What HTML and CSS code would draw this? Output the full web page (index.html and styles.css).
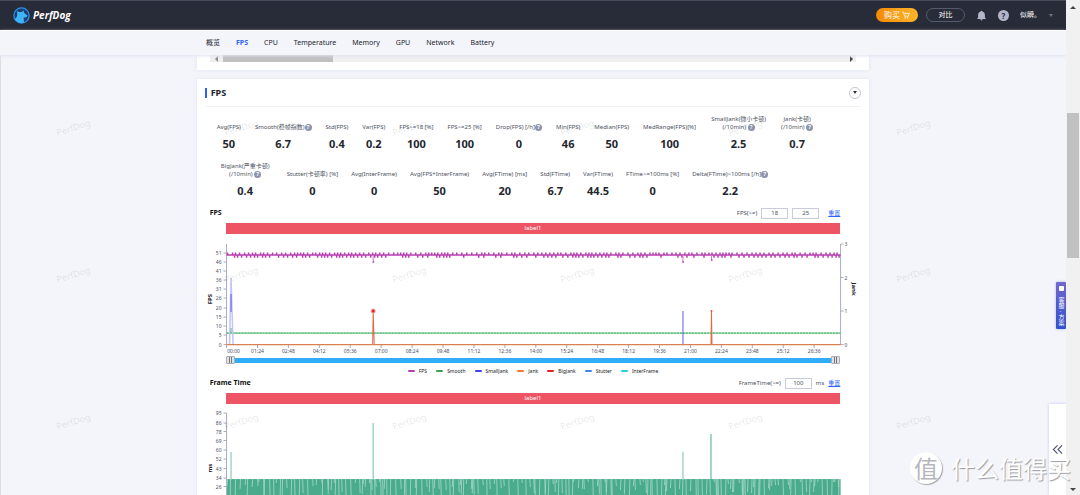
FILE: index.html
```html
<!DOCTYPE html>
<html lang="zh-CN">
<head>
<meta charset="utf-8">
<title>PerfDog</title>
<link rel="stylesheet" href="styles.css">
</head>
<body>
<div class="window">
  <div class="page">
    <header class="topbar">
      <a class="brand" href="#">
        <svg class="brand-mark" viewBox="0 0 16 16" aria-hidden="true">
          <circle cx="8" cy="8" r="7.2" fill="#1c3f70" stroke="#2f8fea" stroke-width="1.2"/>
          <path d="M3.400 3.600C5 5 6.500 4.800 8.400 4.600L9.800 3 10.600 5.600 13.800 8.200 12.400 9.600 10 10 10.400 14.600A7 7 0 0 1 1.800 11.200C4 10 4.600 7 3.400 3.600Z" fill="#3fb4f7"/>
        </svg>
        <span>PerfDog</span>
      </a>
      <div class="tools">
        <button class="pill buy" type="button">购买
          <svg class="cart" viewBox="0 0 10 10" aria-hidden="true"><path d="M0 1.5h2l1.2 5h4.6L9.3 3H3" fill="none" stroke="currentColor"/><circle cx="4" cy="8.6" r=".9" fill="currentColor"/><circle cx="7" cy="8.6" r=".9" fill="currentColor"/></svg>
        </button>
        <button class="pill compare" type="button">对比</button>
        <button class="icon-button" type="button" aria-label="通知">
          <svg viewBox="0 0 12 12"><path d="M6 .8a.9.9 0 0 1 .9.9C8.700 2.100 9.700 3.500 9.700 5.400V8.200L11 9.700H1L2.300 8.200V5.400C2.300 3.500 3.300 2.100 5.100 1.700A.9.9 0 0 1 6 .8ZM4.700 10.200H7.300A1.300 1.300 0 0 1 4.700 10.200Z" fill="#b2b6c8"/></svg>
        </button>
        <button class="icon-button help" type="button" aria-label="帮助">?</button>
        <button class="user" type="button">似瞬。<span class="caret"></span></button>
      </div>
    </header>

    <nav class="tabs">
      <a href="#">概览</a>
      <a href="#" class="active">FPS</a>
      <a href="#">CPU</a>
      <a href="#">Temperature</a>
      <a href="#">Memory</a>
      <a href="#">GPU</a>
      <a href="#">Network</a>
      <a href="#">Battery</a>
    </nav>

    <main class="content">
      <section class="card overview">
        <div class="hscroll"><i class="arrow left"></i><span class="hthumb"></span><i class="arrow right"></i></div>
      </section>

      <section class="card">
        <div class="card-head">
          <h2>FPS</h2>
          <button class="collapse" type="button" aria-label="收起"><span class="caret"></span></button>
        </div>

        <div class="stats">
          <div class="stat"><p>Avg(FPS)</p><b>50</b></div>
          <div class="stat"><p>Smooth(稳帧指数)<i class="q">?</i></p><b>6.7</b></div>
          <div class="stat"><p>Std(FPS)</p><b>0.4</b></div>
          <div class="stat"><p>Var(FPS)</p><b>0.2</b></div>
          <div class="stat"><p>FPS&gt;=18 [%]</p><b>100</b></div>
          <div class="stat"><p>FPS&gt;=25 [%]</p><b>100</b></div>
          <div class="stat"><p>Drop(FPS) [/h]<i class="q">?</i></p><b>0</b></div>
          <div class="stat"><p>Min(FPS)</p><b>46</b></div>
          <div class="stat"><p>Median(FPS)</p><b>50</b></div>
          <div class="stat"><p>MedRange(FPS)[%]</p><b>100</b></div>
          <div class="stat wide"><p>SmallJank(微小卡顿)<br>(/10min) <i class="q">?</i></p><b>2.5</b></div>
          <div class="stat"><p>Jank(卡顿)<br>(/10min) <i class="q">?</i></p><b>0.7</b></div>
        </div>
        <div class="stats second">
          <div class="stat wide"><p>BigJank(严重卡顿)<br>(/10min) <i class="q">?</i></p><b>0.4</b></div>
          <div class="stat"><p>Stutter(卡顿率) [%]</p><b>0</b></div>
          <div class="stat"><p>Avg(InterFrame)</p><b>0</b></div>
          <div class="stat"><p>Avg(FPS+InterFrame)</p><b>50</b></div>
          <div class="stat"><p>Avg(FTime) [ms]</p><b>20</b></div>
          <div class="stat"><p>Std(FTime)</p><b>6.7</b></div>
          <div class="stat"><p>Var(FTime)</p><b>44.5</b></div>
          <div class="stat"><p>FTime&gt;=100ms [%]</p><b>0</b></div>
          <div class="stat"><p>Delta(FTime)&gt;100ms [/h]<i class="q">?</i></p><b>2.2</b></div>
        </div>

        <div class="chart-head first">
          <h3>FPS</h3>
          <label for="fps-low">FPS(&gt;=)</label>
          <input id="fps-low" type="text" value="18">
          <input id="fps-high" type="text" value="25" aria-label="FPS(&gt;=)">
          <a class="apart" href="#">重置</a>
        </div>
        <div class="label-bar">label1</div>
        <svg class="chart" id="fps-chart" viewBox="0 0 672 122"></svg>
        <div class="range"><span class="handle"></span><span class="handle"></span></div>
        <ul class="legend">
          <li class="c-fps">FPS</li>
          <li class="c-smooth">Smooth</li>
          <li class="c-small">SmallJank</li>
          <li class="c-jank">Jank</li>
          <li class="c-big">BigJank</li>
          <li class="c-stutter">Stutter</li>
          <li class="c-inter">InterFrame</li>
        </ul>

        <div class="chart-head">
          <h3>Frame Time</h3>
          <label for="ft">FrameTime(&gt;=)</label>
          <input id="ft" type="text" value="100">
          <span>ms</span>
          <a href="#">重置</a>
        </div>
        <div class="label-bar">label1</div>
        <svg class="chart" id="time-chart" viewBox="0 0 672 122"></svg>
      </section>
    </main>

    <div class="watermarks" aria-hidden="true" id="marks"></div>
    <button class="contact" type="button"><i></i>客服 · 方案</button>
    <button class="drawer" type="button" aria-label="展开">
      <svg viewBox="0 0 12 12"><path d="M6 1.500 1.500 6 6 10.500M11 1.500 6.500 6 11 10.500" fill="none" stroke="#4f5675" stroke-width="1.300"/></svg>
    </button>
  </div>
  <div class="vscroll"><i class="arrow up"></i><span class="vthumb"></span><i class="arrow down"></i></div>
  <div class="stamp"><span class="stamp-badge">值</span><span>什么值得买</span></div>
</div>
<script src="charts.js"></script>
</body>
</html>
```
FILE: styles.css
```css
* { box-sizing: border-box; margin: 0; padding: 0; }
html, body { height: 100%; overflow: hidden; }
body { font: 7px/8px "Noto Sans", "Noto Sans CJK SC", sans-serif; color: #4c5160; background: #f4f5fa; }
button, input { font: inherit; color: inherit; border: 0; background: none; }
a { color: inherit; text-decoration: none; }
i { font-style: normal; }

.window { position: relative; display: flex; height: 100vh; }
.page { position: relative; flex: 1; min-width: 0; overflow: hidden; box-shadow: inset 1px 0 #dcdde3; }

.topbar { display: flex; align-items: center; justify-content: space-between; height: 30px; padding: 0 13px; background: #282c39; box-shadow: inset 0 1px #454b58; }
.brand { display: flex; align-items: center; gap: 3px; color: #fff; font: italic bold 10px/16px "Open Sans", sans-serif; }
.brand-mark { width: 17px; height: 17px; }
.tools { display: flex; align-items: center; color: #fff; }
.pill { display: flex; align-items: center; justify-content: center; gap: 2px; height: 14px; border-radius: 7px; margin-right: 8px; }
.buy { width: 42px; background: linear-gradient(90deg, #f28a05, #ffb52b); font-size: 8px; }
.cart { width: 8px; height: 8px; }
.compare { width: 39px; border: 1px solid #565b6b; margin-right: 11px; }
.icon-button { width: 11px; height: 11px; margin-right: 11px; }
.icon-button svg { display: block; width: 11px; height: 11px; }
.help { border-radius: 50%; background: #b2b6c8; color: #282c39; font-weight: bold; font-size: 8px; line-height: 11px; }
.user { display: flex; align-items: center; gap: 8px; }
.caret { border: 2px solid transparent; border-top: 3px solid #6d7283; border-bottom: 0; }

.tabs { position: relative; z-index: 1; display: flex; align-items: center; gap: 16px; height: 25px; padding: 0 0 0 calc(50% - 327px); border-top: 1px solid #fff; background: #f4f5fa; box-shadow: 0 1px 3px #dfe2f3; color: #22252e; }
.tabs .active { color: #2e62f6; font-weight: bold; }

.content { display: flex; flex-direction: column; gap: 9px; width: 63.1%; margin: 0 auto; }
.card { background: #fff; box-shadow: 0 0 4px #dfe2f3; }
.overview { padding: 0 13px 8px; }
.hscroll { display: flex; align-items: center; height: 7px; background: #efefef; }
.hthumb { width: 110px; height: 7px; margin: 0 auto 0 5px; background: #bfbfbf; }
.arrow { border: 3px solid transparent; }
.left { border-right-color: #8a8a8a; margin-left: 2px; }
.right { border-left-color: #444; }

.card-head { display: flex; align-items: center; justify-content: space-between; height: 28px; margin: 0 8px; border-bottom: 1px solid #f2f2f5; }
h2 { padding-left: 4px; border-left: 2px solid #2e62f6; font-size: 9px; line-height: 10px; color: #20232b; }
.collapse { display: flex; align-items: center; justify-content: center; width: 12px; height: 12px; border: 1px solid #c3c5d4; border-radius: 50%; }
.collapse .caret { border-top-color: #333; }

.stats { display: flex; align-items: flex-end; gap: 14px; margin: 8px 20px 0; font-size: 6px; }
.second { gap: 13px; margin-top: 6px; }
.stat { text-align: center; white-space: nowrap; }
.wide { min-width: 57px; }
.stat b { display: block; padding-top: 1px; font-size: 11px; line-height: 24px; color: #23262e; }
.q { display: inline-block; width: 7px; height: 7px; border-radius: 50%; background: #8e93ac; color: #fff; line-height: 7px; font-weight: bold; text-align: center; }

.chart-head { display: flex; align-items: center; gap: 4px; height: 16px; padding: 0 29px 0 13px; font-size: 6px; }
.first { margin-top: 2px; }
h3 { margin-right: auto; font-size: 7px; line-height: 8px; color: #111; }
.chart-head input { width: 27px; height: 11px; border: 1px solid #c9cbda; text-align: center; }
.chart-head a { color: #2e62f6; text-decoration: underline; }
.chart-head .apart { margin-left: 5px; }
.label-bar { margin: 2px 29px 0; font-size: 6px; line-height: 11px; text-align: center; color: #fff; background: #ed5565; }
.chart { display: block; width: 100%; }
.chart text { font-size: 5px; fill: #4a5062; }
.chart .name { font-size: 6px; font-weight: bold; fill: #222; }

.range { display: flex; align-items: center; justify-content: space-between; height: 8px; margin: 0 29px; background: linear-gradient(#fff 2px, #2fadf8 2px, #2fadf8 7px, #fff 7px); }
.handle { width: 9px; height: 8px; border: 1px solid #a9adb5; border-radius: 1px; background: linear-gradient(90deg, #dfe1e5 2px, #777 2px, #777 3px, #dfe1e5 3px, #dfe1e5 4px, #777 4px, #777 5px, #dfe1e5 5px); }
.legend { display: flex; justify-content: center; gap: 9px; padding-top: 3px; list-style: none; font-size: 5px; color: #222; }
.legend li { display: flex; align-items: center; gap: 4px; }
.legend li::before { content: ""; width: 7px; height: 2px; border-radius: 1px; background: var(--c); }
.c-fps { --c: #b93db2; } .c-smooth { --c: #35a853; } .c-small { --c: #4040f0; } .c-jank { --c: #f4752c; }
.c-big { --c: #e22424; } .c-stutter { --c: #4285f4; } .c-inter { --c: #26cfdb; }

.watermarks { position: absolute; z-index: 1; inset: 122px 0 0 56px; display: grid; grid-template-columns: repeat(6, 168px); grid-auto-rows: 147px; pointer-events: none; font-size: 9px; line-height: 12px; color: rgba(40, 44, 57, .12); }
.watermarks span { width: 34px; height: 12px; transform: rotate(-17deg); }
.contact { position: absolute; right: 0; top: 282px; display: flex; align-items: center; justify-content: center; gap: 6px; width: 10px; height: 47px; writing-mode: vertical-rl; border-radius: 1px; color: #fff; font-size: 6px; background: linear-gradient(#7168cf, #3150cb); box-shadow: 0 0 3px #a9b2dd; white-space: nowrap; }
.contact i { width: 5px; height: 5px; background: #fff; border-radius: 1px; }
.drawer { position: absolute; right: 0; bottom: 0; width: 17px; height: 91px; background: #fff; box-shadow: 0 0 3px #bdc9f8; }
.drawer svg { display: block; width: 11px; height: 11px; margin: 0 auto; }
.stamp { position: absolute; z-index: 2; right: 9px; bottom: 11px; display: flex; align-items: center; gap: 9px; font: 24px/32px "Noto Sans CJK SC", sans-serif; color: #fff; text-shadow: 1px 1px 1px #999ca4; white-space: nowrap; pointer-events: none; }
.stamp-badge { width: 32px; height: 32px; border-radius: 50%; background: #fff; color: #b5b7bd; text-align: center; text-shadow: none; box-shadow: 1px 1px 1px #a5a7ad; }

.vscroll { display: flex; flex-direction: column; align-items: center; width: 14px; background: #f1f1f1; }
.vthumb { width: 12px; height: 29.3%; margin: 104px 0 auto; background: #c1c1c1; }
.up { border-bottom-color: #444; margin-top: 3px; }
.down { border-top-color: #444; margin-bottom: 1px; }
```
FILE: charts.js
```js
const NS = 'http://www.w3.org/2000/svg';
const LEFT = 29.5, RIGHT = 643;

function add(svg, tag, attrs, text) {
  const el = document.createElementNS(NS, tag);
  for (const k in attrs) el.setAttribute(k, attrs[k]);
  if (text !== undefined) el.textContent = text;
  svg.appendChild(el);
}
function line(svg, d, stroke, width, extra) {
  add(svg, 'path', Object.assign({ d, fill: 'none', stroke, 'stroke-width': width }, extra));
}
let seed = 7;
function rand() {
  seed = (seed * 16807) % 2147483647;
  return seed / 2147483647;
}
function yAxis(svg, ticks, top, bottom) {
  line(svg, `M${LEFT} ${top}V${bottom}`, '#a9acc0', 1);
  for (const [label, y] of ticks) {
    line(svg, `M${LEFT - 3} ${y}H${LEFT}`, '#a9acc0', 1);
    add(svg, 'text', { x: LEFT - 5, y: y + 2, 'text-anchor': 'end' }, label);
  }
}

const fps = document.getElementById('fps-chart');
yAxis(fps, [[51, 19], [46, 28], [41, 37], [36, 46], [31, 55], [26, 64], [20, 74], [15, 83], [10, 92], [5, 101], [0, 110.5]], 10, 111);
line(fps, `M${RIGHT} 10V111`, '#a9acc0', 1);
[[3, 10], [2, 43.5], [1, 77], [0, 110.5]].forEach(([label, y]) => {
  line(fps, `M${RIGHT} ${y}h3`, '#a9acc0', 1);
  add(fps, 'text', { x: RIGHT + 4, y: y + 2 }, label);
});
for (let i = 0; i < 20; i++) {
  const x = LEFT + i * 30.9, s = i * 84;
  const label = String(Math.floor(s / 60)).padStart(2, '0') + ':' + String(s % 60).padStart(2, '0');
  line(fps, `M${x} 111v3`, '#a9acc0', 1);
  add(fps, 'text', { x: i ? x : x + 7, y: 119, 'text-anchor': 'middle' }, label);
}
add(fps, 'text', { class: 'name', transform: 'translate(15 65) rotate(-90)', 'text-anchor': 'middle' }, 'FPS');
add(fps, 'text', { class: 'name', transform: 'translate(654 55) rotate(90)', 'text-anchor': 'middle' }, 'Jank');

line(fps, `M${LEFT} 99H${RIGHT}`, '#7fd096', 1.2);
line(fps, `M${LEFT} 99H${RIGHT}`, '#5bb877', 1.2, { 'stroke-dasharray': '2 1' });
line(fps, 'M32.500 110 34 44 36 110', '#c4c4fb', 1.5);
line(fps, 'M34 60V78M485.500 77V110', '#5d5de8', 1);
line(fps, 'M34 94V99', '#5fae9c', 1);
line(fps, 'M175.500 110 176 77 177 110M513.500 110 514 77 514.500 110', '#e0694a', 1);
line(fps, `M${LEFT} 110.500H${RIGHT}`, '#d9804f', 1.2);
add(fps, 'circle', { cx: 176, cy: 77, r: 2.5, fill: '#f7a3a3' });
add(fps, 'circle', { cx: 176, cy: 77, r: 1.5, fill: '#e22424' });
add(fps, 'circle', { cx: 514, cy: 77, r: 1, fill: '#e8502c' });

let noise = '';
for (let x = LEFT + 1; x < RIGHT - 1; x += 3 + Math.floor(rand() * 3)) {
  noise += `M${x} 21V18.500`;
  if (rand() > 0.25) noise += `M${x + 2} 21V23.800`;
}
line(fps, noise, '#b93db2', 1.5);
line(fps, `M${LEFT} 21H${RIGHT}`, '#b93db2', 1.6);
line(fps, 'M176 21V28.500M485.500 21V28.500M514 21V26.500', '#d07acb', 1);
line(fps, 'M175.500 28h1.500M485 28h1.500M513.500 26h1.500', '#b93db2', 1.5);

const time = document.getElementById('time-chart');
yAxis(time, [[95, 9], [86, 19], [78, 27.5], [69, 36.5], [60, 46], [52, 55], [43, 64.5], [34, 74], [26, 82.5]], 9, 111);
add(time, 'text', { class: 'name', transform: 'translate(15 64) rotate(-90)', 'text-anchor': 'middle' }, 'ms');
add(time, 'rect', { x: LEFT + 0.5, y: 75, width: RIGHT - LEFT - 0.5, height: 36, fill: '#49ab8c' });
let gaps = '';
for (let x = LEFT + 1; x < RIGHT - 1; x += 1 + Math.floor(rand() * 5)) {
  gaps += `M${x} 75l${rand() > 0.5 ? 0.5 : -0.5} ${3 + Math.floor(rand() * 26)}`;
}
line(time, gaps, '#a8d9c8', 0.8);
line(time, 'M34 76V48M176 76V19M485.500 76V48', '#8accb5', 1.2);
line(time, 'M513.500 76V30', '#49ab8c', 1);

const marks = document.getElementById('marks');
for (let i = 0; i < 18; i++) {
  const s = document.createElement('span');
  s.textContent = 'PerfDog';
  marks.appendChild(s);
}
```
